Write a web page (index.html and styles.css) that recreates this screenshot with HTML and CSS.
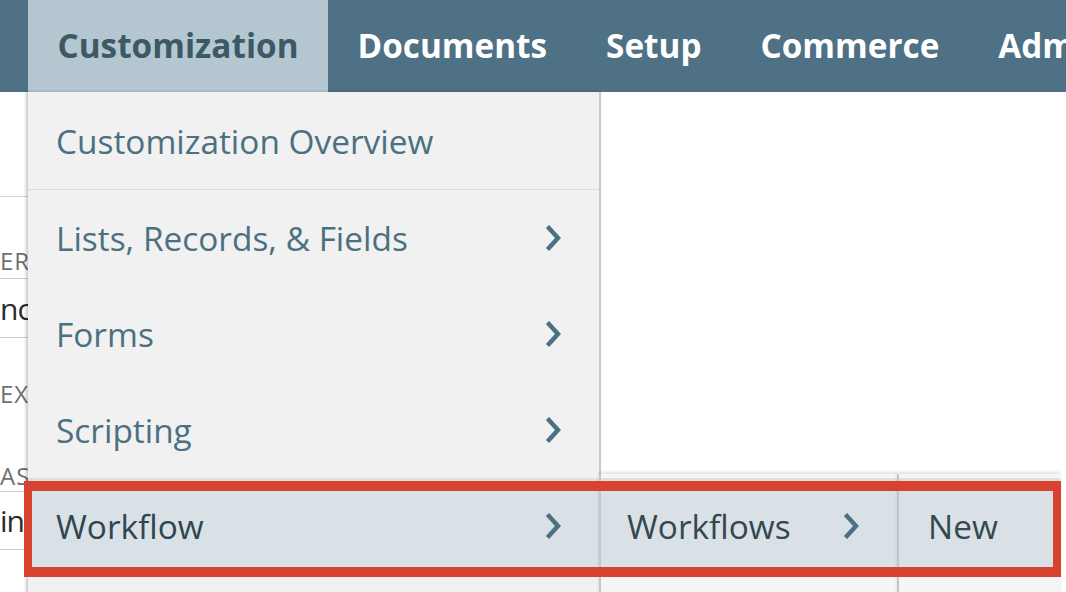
FILE: index.html
```html
<!DOCTYPE html>
<html>
<head>
<meta charset="utf-8">
<link rel="stylesheet" href="styles.css">
</head>
<body>
<header class="nav">
  <div class="nav-item active">
    <span>Customization</span>
    <ul class="menu">
      <li class="menu-row first"><span>Customization Overview</span></li>
      <li class="menu-row"><span>Lists, Records, &amp; Fields</span><svg class="chev" width="16" height="28" viewBox="0 0 16 28"><polyline points="2.5,2.5 13,14 2.5,25.5"/></svg></li>
      <li class="menu-row"><span>Forms</span><svg class="chev" width="16" height="28" viewBox="0 0 16 28"><polyline points="2.5,2.5 13,14 2.5,25.5"/></svg></li>
      <li class="menu-row"><span>Scripting</span><svg class="chev" width="16" height="28" viewBox="0 0 16 28"><polyline points="2.5,2.5 13,14 2.5,25.5"/></svg></li>
      <li class="menu-row hot"><span>Workflow</span><svg class="chev" width="16" height="28" viewBox="0 0 16 28"><polyline points="2.5,2.5 13,14 2.5,25.5"/></svg>
        <ul class="sub sub2">
          <li class="sub-row hot"><span>Workflows</span><svg class="chev" width="16" height="28" viewBox="0 0 16 28"><polyline points="2.5,2.5 13,14 2.5,25.5"/></svg>
            <ul class="sub sub3">
              <li class="sub-row hot"><span>New</span></li>
            </ul>
          </li>
        </ul>
        <div class="highlight"></div>
      </li>
    </ul>
  </div>
  <div class="nav-item"><span>Documents</span></div>
  <div class="nav-item"><span>Setup</span></div>
  <div class="nav-item"><span>Commerce</span></div>
  <div class="nav-item"><span>Adm</span></div>
</header>
<main class="page">
  <div class="form">
    <div class="block"></div>
    <div class="label lbl1">ERS</div>
    <div class="input in1">nce</div>
    <div class="label lbl2">EXP</div>
    <div class="label lbl3">ASS</div>
    <div class="input in2">in,</div>
  </div>
</main>
</body>
</html>
```

FILE: styles.css
```css
* { box-sizing: border-box; }
html, body {
  margin: 0;
  padding: 0;
  width: 1066px;
  height: 592px;
  overflow: hidden;
  background: #ffffff;
  font-family: "Open Sans", "DejaVu Sans", sans-serif;
}
ul { list-style: none; margin: 0; padding: 0; }

.nav {
  height: 92px;
  background: #4e7185;
  display: flex;
  padding-left: 28px;
  white-space: nowrap;
  position: relative;
  z-index: 5;
}
.nav-item {
  position: relative;
  height: 92px;
  padding: 0 29.5px;
  display: flex;
  align-items: center;
  font-size: 33.3px;
  font-weight: 700;
  color: #ffffff;
  flex-shrink: 0;
}
.nav-item > span { position: relative; top: -1px; }
.nav-item.active {
  background: #b4c6d0;
  color: #3c5966;
}

.menu {
  position: absolute;
  top: 92px;
  left: 0;
  width: 573px;
  padding-bottom: 30px;
  background: #f0f1f0;
  border-right: 2px solid #c9cbca;
  box-shadow: -2px 0 3px rgba(0,0,0,0.22);
  font-weight: 400;
  font-size: 33.4px;
  color: #4b7081;
}
.menu-row {
  position: relative;
  height: 96px;
  display: flex;
  align-items: center;
  justify-content: space-between;
  padding: 0 38px 0 28px;
}
.menu-row.first {
  height: 98px;
  border-bottom: 1px solid #dcdedd;
}
.menu-row.hot {
  background: #d9e1e6;
  color: #2f4651;
}
.chev {
  fill: none;
  stroke: #4b7183;
  stroke-width: 4.5;
  stroke-linejoin: miter;
}

.sub {
  position: absolute;
  top: -4px;
  left: 100%;
  padding-top: 4px;
  background: #f4f5f5;
  border-left: 2px solid #c3c6c6;
  box-shadow: 0 -2px 3px rgba(0,0,0,0.12);
  height: 140px;
}
.sub2 { width: 298px; }
.sub3 { width: 163px; }
.sub-row {
  position: relative;
  height: 96px;
  display: flex;
  align-items: center;
  justify-content: space-between;
  padding: 0 38px 0 26px;
  color: #33484f;
}
.sub-row.hot { background: #d9e1e6; }
.sub3 .sub-row { padding-left: 29px; }

.highlight {
  position: absolute;
  top: 3px;
  left: -4px;
  width: 1037px;
  height: 96px;
  border-style: solid;
  border-color: #d8432f;
  border-width: 10px 8px;
  pointer-events: none;
  z-index: 10;
}

.page { position: relative; z-index: 1; }
.form {
  width: 601px;
  overflow: hidden;
}
.block {
  height: 105px;
  border-bottom: 1px solid #d0d0d0;
  border-right: 1px solid #bdbdbd;
}
.label {
  font-size: 24px;
  line-height: 28px;
  color: #707070;
  letter-spacing: 1px;
  text-transform: uppercase;
}
.lbl1 { margin-top: 50px; }
.lbl2 { margin-top: 42px; }
.lbl3 { margin-top: 54px; }
.input {
  font-size: 30px;
  color: #2b2b2b;
  border-top: 1px solid #cdcdcd;
  border-bottom: 1px solid #cdcdcd;
  border-right: 1px solid #b5b5b5;
  display: flex;
  align-items: center;
  letter-spacing: -1px;
}
.in1 { margin-top: 3px; height: 60px; }
.in2 { margin-top: 1px; height: 59px; }
```
